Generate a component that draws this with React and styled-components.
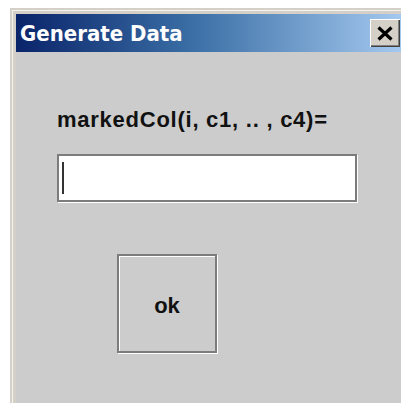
import React from "react";
import styled, { createGlobalStyle } from "styled-components";

const GlobalStyle = createGlobalStyle`
  html, body {
    margin: 0;
    padding: 0;
    background: #ffffff;
    overflow: hidden;
  }
  body {
    width: 401px;
    height: 403px;
    font-family: "Liberation Sans", Arial, sans-serif;
  }
`;

const Window = styled.div`
  margin: 8px 0 0 10px;
  width: 400px;
  height: 395px;
  box-sizing: border-box;
  display: flex;
  flex-direction: column;
  background: #d4d0c8;
  border: 2px solid #d4d0c8;
  border-bottom: none;
  box-shadow: inset 1px 1px 0 #f4f3ef;
  padding: 4px 3px 0 4px;
`;

const TitleBar = styled.div`
  height: 38px;
  flex: none;
  display: flex;
  align-items: center;
  justify-content: space-between;
  padding: 0 5px 0 4px;
  background: linear-gradient(to right, #0a246a 0%, #3a6ea5 45%, #a6caf0 100%);
`;

const Title = styled.span`
  color: #ffffff;
  font-family: "DejaVu Sans Condensed", "DejaVu Sans", sans-serif;
  font-stretch: condensed;
  font-weight: bold;
  font-size: 22px;
  white-space: nowrap;
`;

const CloseButton = styled.button`
  width: 30px;
  height: 28px;
  padding: 0;
  display: flex;
  align-items: center;
  justify-content: center;
  background: #d4d0c8;
  border: none;
  box-shadow: inset 1px 1px 0 #ffffff, inset -1px -1px 0 #404040,
    inset -2px -2px 0 #808080;
  color: #000000;
`;

const Content = styled.div`
  flex: 1;
  display: flex;
  flex-direction: column;
  align-items: flex-start;
  background: #cccccc;
  padding-left: 41px;
`;

const Label = styled.div`
  margin-top: 57px;
  font-size: 22px;
  line-height: 22px;
  font-weight: bold;
  letter-spacing: 0.75px;
  color: #111111;
  white-space: nowrap;
`;

const Field = styled.div`
  margin-top: 23px;
  width: 300px;
  height: 48px;
  box-sizing: border-box;
  background: #ffffff;
  border: 2px solid #7c7c7c;
  box-shadow: 1px 1px 0 #ffffff;
  display: flex;
  align-items: center;
  padding-left: 3px;
`;

const Caret = styled.span`
  width: 2px;
  height: 32px;
  background: #333333;
`;

const OkButton = styled.button`
  margin: 52px 0 0 60px;
  width: 100px;
  height: 99px;
  box-sizing: border-box;
  background: #cccccc;
  border: 2px solid #7c7c7c;
  box-shadow: inset 1px 1px 0 #ffffff, 1px 1px 0 #ffffff;
  font-family: "Liberation Sans", Arial, sans-serif;
  font-size: 22px;
  font-weight: bold;
  color: #111111;
  padding: 5px 0 0;
`;

function CloseGlyph() {
  return (
    <svg width="18" height="15" viewBox="0 0 18 15">
      <path d="M2.5 1.5 L15.5 13.5 M15.5 1.5 L2.5 13.5" stroke="#000" strokeWidth="3.2" fill="none" />
    </svg>
  );
}

export default function App() {
  return (
    <>
      <GlobalStyle />
      <Window>
        <TitleBar>
          <Title>Generate Data</Title>
          <CloseButton aria-label="close">
            <CloseGlyph />
          </CloseButton>
        </TitleBar>
        <Content>
          <Label>markedCol(i, c1, .. , c4)=</Label>
          <Field>
            <Caret />
          </Field>
          <OkButton>ok</OkButton>
        </Content>
      </Window>
    </>
  );
}
